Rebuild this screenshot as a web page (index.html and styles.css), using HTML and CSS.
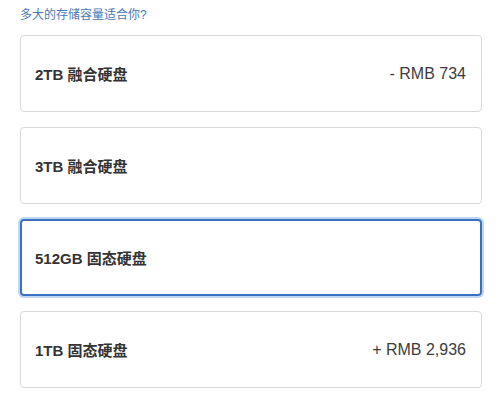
FILE: index.html
```html
<!DOCTYPE html>
<html lang="zh-CN">
<head>
  <meta charset="UTF-8">
  <meta name="viewport" content="width=device-width, initial-scale=1.0">
  <title>存储容量</title>
  <link rel="stylesheet" href="styles.css">
</head>
<body>
  <p class="question">多大的存储容量适合你?</p>

  <div class="options">
    <div class="option">
      <span class="label">2TB 融合硬盘</span>
      <span class="price">- RMB 734</span>
    </div>
    <div class="option">
      <span class="label">3TB 融合硬盘</span>
    </div>
    <div class="option selected">
      <span class="label">512GB 固态硬盘</span>
    </div>
    <div class="option">
      <span class="label">1TB 固态硬盘</span>
      <span class="price">+ RMB 2,936</span>
    </div>
  </div>
</body>
</html>
```

FILE: styles.css
```css
body {
  font-family: "Liberation Sans", "Noto Sans CJK SC", sans-serif;
  margin: 0;
  padding: 0 19px 0 20px;
  background-color: #ffffff;
  color: #333333;
}
.question {
  margin: 0;
  height: 35px;
  line-height: 30px;
  font-size: 12px;
  color: #4a78b8;
}
.options {
  display: flex;
  flex-direction: column;
  gap: 15px;
}
.option {
  box-sizing: border-box;
  height: 77px;
  display: flex;
  align-items: center;
  justify-content: space-between;
  padding: 0 15px 0 14px;
  border: 1px solid #d9d9d9;
  border-radius: 4px;
}
.option.selected {
  border: 2px solid #3a70bd;
  padding: 0 14px 0 13px;
  box-shadow: 0 0 0 2px #bcd6f3;
}
.label {
  font-size: 15px;
  font-weight: bold;
}
.price {
  font-size: 16px;
  color: #3c3c3c;
}
```
